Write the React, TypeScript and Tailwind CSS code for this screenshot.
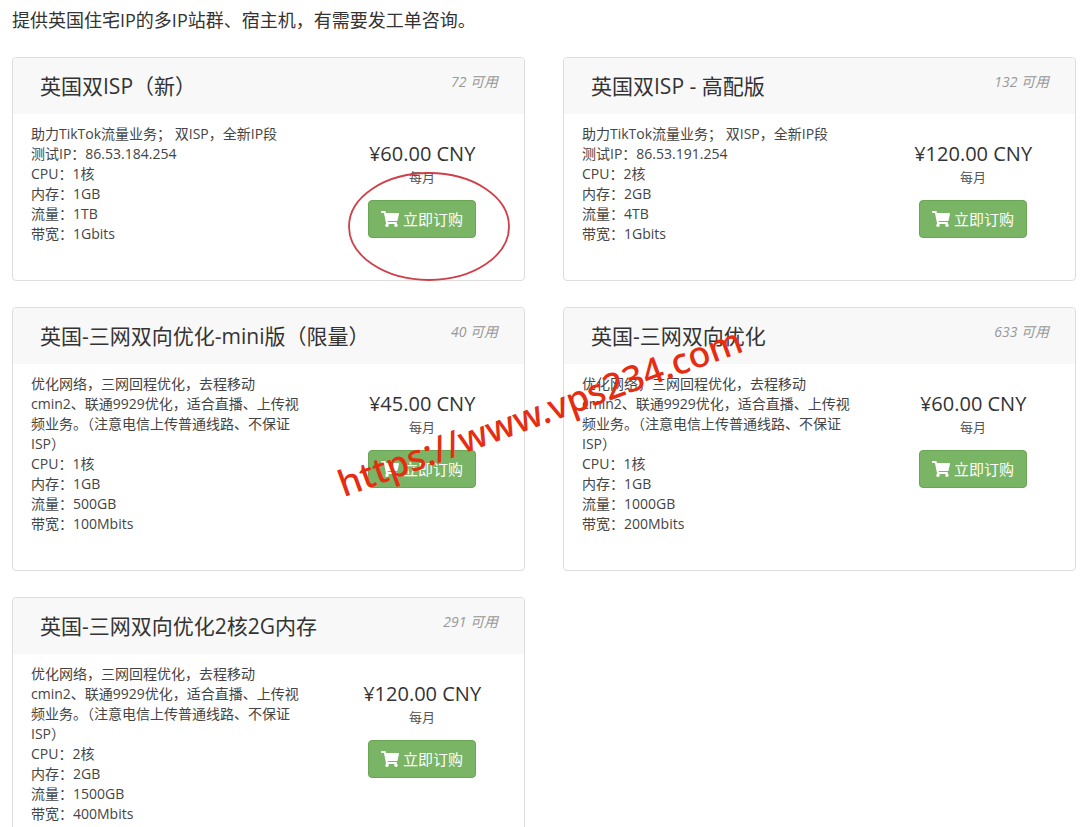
import { FaShoppingCart } from "react-icons/fa";

type Plan = {
  id: string;
  name: string;
  available: number;
  price: string;
  lines: string[];
  highlighted?: boolean;
};

const ispIntro = "助力TikTok流量业务； 双ISP，全新IP段";
const routeIntro =
  "优化网络，三网回程优化，去程移动cmin2、联通9929优化，适合直播、上传视频业务。（注意电信上传普通线路、不保证ISP）";

const plans: Plan[] = [
  {
    id: "uk-isp",
    name: "英国双ISP（新）",
    available: 72,
    price: "¥60.00 CNY",
    lines: [ispIntro, "测试IP：86.53.184.254", "CPU：1核", "内存：1GB", "流量：1TB", "带宽：1Gbits"],
    highlighted: true,
  },
  {
    id: "uk-isp-pro",
    name: "英国双ISP - 高配版",
    available: 132,
    price: "¥120.00 CNY",
    lines: [ispIntro, "测试IP：86.53.191.254", "CPU：2核", "内存：2GB", "流量：4TB", "带宽：1Gbits"],
  },
  {
    id: "uk-mini",
    name: "英国-三网双向优化-mini版（限量）",
    available: 40,
    price: "¥45.00 CNY",
    lines: [routeIntro, "CPU：1核", "内存：1GB", "流量：500GB", "带宽：100Mbits"],
  },
  {
    id: "uk-route",
    name: "英国-三网双向优化",
    available: 633,
    price: "¥60.00 CNY",
    lines: [routeIntro, "CPU：1核", "内存：1GB", "流量：1000GB", "带宽：200Mbits"],
  },
  {
    id: "uk-route-2c2g",
    name: "英国-三网双向优化2核2G内存",
    available: 291,
    price: "¥120.00 CNY",
    lines: [routeIntro, "CPU：2核", "内存：2GB", "流量：1500GB", "带宽：400Mbits"],
  },
];

function PlanCard({ plan }: { plan: Plan }) {
  return (
    <article className="rounded border border-[#dddddd] bg-white">
      <header className="flex items-start justify-between rounded-t bg-[#f8f8f8] pt-3.5 pr-6.5 pb-3.5 pl-[27px]">
        <h2 className="text-[21px] leading-7 text-[#333333]">{plan.name}</h2>
        <span className="text-sm leading-5 text-[#999999] italic">{plan.available} 可用</span>
      </header>
      <div className="grid grid-cols-[5fr_3fr] gap-8 pt-2.5 pr-[19px] pb-9 pl-4.5">
        <div className="text-sm leading-5 text-[#444444]">
          {plan.lines.map((line) => (
            <p key={line}>{line}</p>
          ))}
        </div>
        <footer className="flex flex-col items-center pt-4">
          <p className="text-xl leading-7 whitespace-nowrap text-[#333333]">{plan.price}</p>
          <p className="text-[13px] leading-[18px] text-[#555555]">每月</p>
          <div className="relative mt-3.5">
            <button
              type="button"
              className="flex h-[38px] items-center gap-1 rounded border border-[#6aa455] bg-[#7ab465] px-3 text-[15px] whitespace-nowrap text-white"
            >
              <FaShoppingCart className="h-4 w-[18px]" aria-hidden="true" />
              立即订购
            </button>
            {plan.highlighted && (
              <svg
                className="pointer-events-none absolute -top-7 -left-5 h-[109px] w-[162px]"
                viewBox="0 0 162 109"
                fill="none"
                aria-hidden="true"
              >
                <ellipse cx="81" cy="54.5" rx="80" ry="53.5" stroke="#d0404a" strokeWidth="1.8" />
              </svg>
            )}
          </div>
        </footer>
      </div>
    </article>
  );
}

export default function App() {
  return (
    <main className="relative overflow-hidden bg-white pt-2 pr-1 pb-6 pl-3 font-['Open_Sans','Noto_Sans_CJK_SC',sans-serif]">
      <p className="text-lg leading-6 text-[#333333]">
        提供英国住宅IP的多IP站群、宿主机，有需要发工单咨询。
      </p>
      <section className="mt-[25px] grid grid-cols-2 gap-x-[38px] gap-y-[26px]">
        {plans.map((plan) => (
          <PlanCard key={plan.id} plan={plan} />
        ))}
      </section>
      <span className="pointer-events-none absolute top-[412px] left-1/2 -translate-x-1/2 -translate-y-1/2 -rotate-20 font-['Noto_Sans',sans-serif] text-4xl leading-none font-medium whitespace-nowrap text-[#e62d12]">
        https://www.vps234.com
      </span>
    </main>
  );
}
